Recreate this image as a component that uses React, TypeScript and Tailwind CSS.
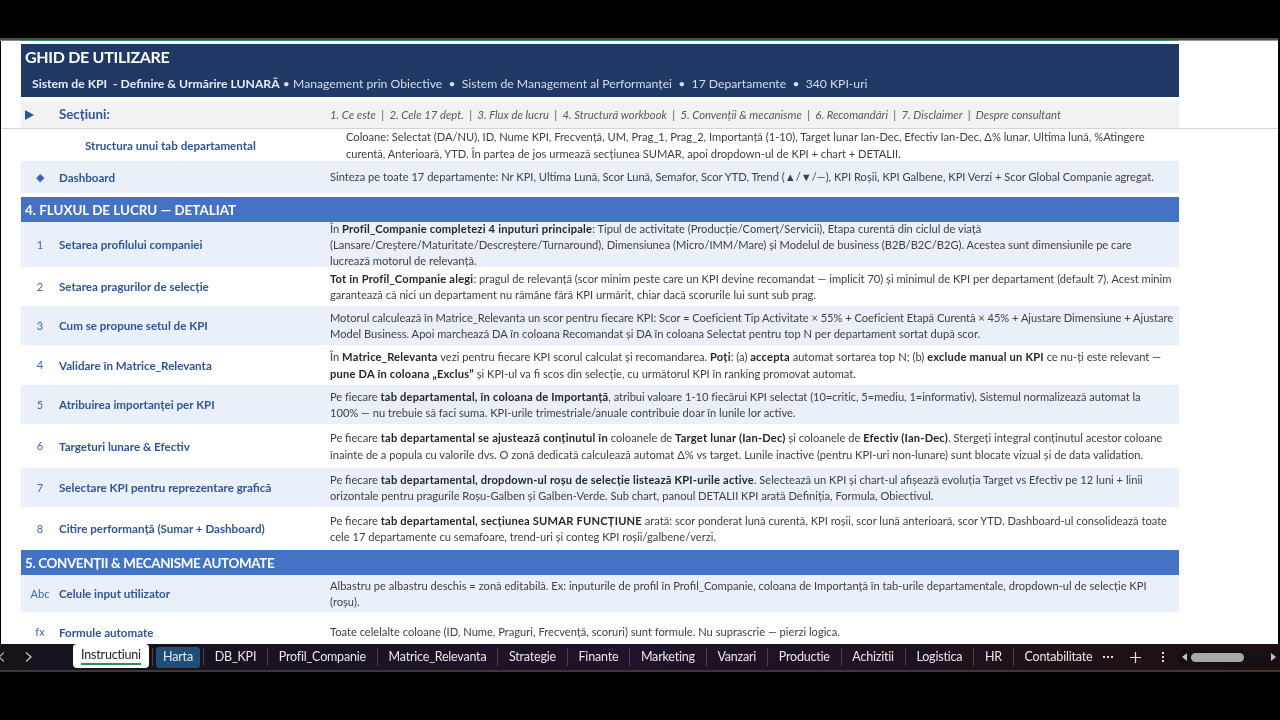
import React from "react";

const tabs = [
  "DB_KPI",
  "Profil_Companie",
  "Matrice_Relevanta",
  "Strategie",
  "Finante",
  "Marketing",
  "Vanzari",
  "Productie",
  "Achizitii",
  "Logistica",
  "HR",
  "Contabilitate",
];

const Row = ({ mark, label, light, h, children, markClass }: any) => (
  <div className={`flex shrink-0 items-center pt-[1px] ${h} ${light ? "bg-[#EAF0F9]" : "bg-white"}`}>
    <div className={`w-[38px] shrink-0 text-center text-[11px] text-[#3F68AD] ${markClass ?? ""}`}>{mark}</div>
    <div className="w-[271px] shrink-0 text-[11.6px] font-bold whitespace-nowrap text-[#2F5597]">{label}</div>
    <div className="text-[11.13px] leading-[16.3px] whitespace-nowrap text-[#404040]">{children}</div>
  </div>
);

const Section = ({ children }: any) => (
  <div className="flex h-[25px] shrink-0 items-center bg-[#4472C4] pt-[1px] pl-[4px] text-[13.4px] font-bold text-white">{children}</div>
);

const B = ({ children }: any) => <b className="font-bold tracking-[0.2px] text-[#262626]">{children}</b>;

export default function App() {
  return (
    <div className="flex h-[720px] w-[1280px] flex-col overflow-hidden bg-black font-['Lato',sans-serif] blur-[0.3px]">
      <div className="h-[38px] shrink-0" />
      <div className="h-[2px] w-[1278px] shrink-0 bg-[#4a4a4a]" />
      <div className="flex h-[1px] shrink-0">
        <div className="w-[20px] bg-[#888888]" />
        <div className="w-[1159px] bg-[#3E8E5A]" />
        <div className="w-[99px] bg-[#999999]" />
      </div>

      <div className="mr-[2px] ml-[1px] flex h-[603px] shrink-0 flex-col overflow-hidden bg-white">
        <div className="mt-[3px] ml-[20px] flex h-[53px] w-[1158px] shrink-0 flex-col bg-[#1F3864] text-white">
          <div className="mt-[2px] pl-[4px] text-[16px] leading-[22px] font-bold tracking-[-0.3px]">GHID DE UTILIZARE</div>
          <div className="mt-[8px] pl-[11px] text-[12.2px] leading-[16px] whitespace-nowrap text-[#D6DEEC]">
            <b className="font-bold text-[#E8EDF5]">Sistem de KPI &nbsp;- Definire &amp; Urmărire LUNARĂ</b> • Management prin Obiective &nbsp;• &nbsp;Sistem de Management al Performanței &nbsp;• &nbsp;17 Departamente &nbsp;• &nbsp;340 KPI-uri
          </div>
        </div>

        <div className="mt-[4px] ml-[20px] flex h-[27px] w-[1158px] shrink-0 items-center bg-[#F2F2F2] pt-[1px]">
          <div className="w-[38px] shrink-0 pl-[4px]">
            <svg width="9" height="10" viewBox="0 0 9 10" className="block"><path d="M0 0 L9 5 L0 10 Z" fill="#2F5597" /></svg>
          </div>
          <div className="w-[271px] shrink-0 text-[13.3px] font-bold text-[#2F5597]">Secțiuni:</div>
          <div className="text-[11.3px] whitespace-nowrap text-[#595959] italic">
            1. Ce este &nbsp;|&nbsp; 2. Cele 17 dept. &nbsp;|&nbsp; 3. Flux de lucru &nbsp;|&nbsp; 4. Structură workbook &nbsp;|&nbsp; 5. Convenții &amp; mecanisme &nbsp;|&nbsp; 6. Recomandări &nbsp;|&nbsp; 7. Disclaimer &nbsp;|&nbsp; Despre consultant
          </div>
        </div>
        <div className="h-[1px] shrink-0 bg-[#D4D4D4]" />

        <div className="ml-[20px] flex w-[1158px] flex-col">
          <div className="flex h-[32px] shrink-0 items-center bg-white pt-[1px]">
            <div className="w-[64px] shrink-0" />
            <div className="w-[261px] shrink-0 text-[11.6px] font-bold whitespace-nowrap text-[#2F5597]">Structura unui tab departamental</div>
            <div className="text-[11.13px] leading-[16.3px] whitespace-nowrap text-[#404040]">
              Coloane: Selectat (DA/NU), ID, Nume KPI, Frecvență, UM, Prag_1, Prag_2, Importanță (1-10), Target lunar Ian-Dec, Efectiv Ian-Dec, Δ% lunar, Ultima lună, %Atingere<br />
              curentă, Anterioară, YTD. În partea de jos urmează secțiunea SUMAR, apoi dropdown-ul de KPI + chart + DETALII.
            </div>
          </div>
          <Row mark="◆" markClass="text-[9px] text-[#2F5FB0]" label="Dashboard" light h="h-[32px]">
            Sinteza pe toate 17 departamente: Nr KPI, Ultima Lună, Scor Lună, Semafor, Scor YTD, Trend (▲/▼/—), KPI Roșii, KPI Galbene, KPI Verzi + Scor Global Companie agregat.
          </Row>
          <div className="h-[4px] shrink-0" />
          <Section>4. FLUXUL DE LUCRU — DETALIAT</Section>
          <Row mark="1" label="Setarea profilului companiei" light h="h-[45px]">
            În <B>Profil_Companie completezi 4 inputuri principale</B>: Tipul de activitate (Producție/Comerț/Servicii), Etapa curentă din ciclul de viață<br />
            (Lansare/Creștere/Maturitate/Descreștere/Turnaround), Dimensiunea (Micro/IMM/Mare) și Modelul de business (B2B/B2C/B2G). Acestea sunt dimensiunile pe care<br />
            lucrează motorul de relevanță.
          </Row>
          <Row mark="2" label="Setarea pragurilor de selecție" h="h-[39px]">
            <B>Tot în Profil_Companie alegi</B>: pragul de relevanță (scor minim peste care un KPI devine recomandat — implicit 70) și minimul de KPI per departament (default 7). Acest minim<br />
            garantează că nici un departament nu rămâne fără KPI urmărit, chiar dacă scorurile lui sunt sub prag.
          </Row>
          <Row mark="3" label="Cum se propune setul de KPI" light h="h-[39px]">
            <span className="tracking-[-0.04px]">Motorul calculează în Matrice_Relevanta un scor pentru fiecare KPI: Scor = Coeficient Tip Activitate × 55% + Coeficient Etapă Curentă × 45% + Ajustare Dimensiune + Ajustare</span><br />
            Model Business. Apoi marchează DA în coloana Recomandat și DA în coloana Selectat pentru top N per departament sortat după scor.
          </Row>
          <Row mark="4" label="Validare în Matrice_Relevanta" h="h-[40px]">
            În <B>Matrice_Relevanta</B> vezi pentru fiecare KPI scorul calculat și recomandarea. <B>Poți</B>: (a) <B>accepta</B> automat sortarea top N; (b) <B>exclude manual un KPI</B> ce nu-ți este relevant —<br />
            <B>pune DA în coloana „Exclus”</B> și KPI-ul va fi scos din selecție, cu următorul KPI în ranking promovat automat.
          </Row>
          <Row mark="5" label="Atribuirea importanței per KPI" light h="h-[39px]">
            <span className="tracking-[-0.04px]">Pe fiecare <B>tab departamental, în coloana de Importanță</B>, atribui valoare 1-10 fiecărui KPI selectat (10=critic, 5=mediu, 1=informativ). Sistemul normalizează automat la</span><br />
            100% — nu trebuie să faci suma. KPI-urile trimestriale/anuale contribuie doar în lunile lor active.
          </Row>
          <Row mark="6" label="Targeturi lunare & Efectiv" h="h-[44px]">
            Pe fiecare <B>tab departamental se ajustează conținutul în</B> coloanele de <B>Target lunar (Ian-Dec)</B> și coloanele de <B>Efectiv (Ian-Dec)</B>. Stergeți integral conținutul acestor coloane<br />
            înainte de a popula cu valorile dvs. O zonă dedicată calculează automat Δ% vs target. Lunile inactive (pentru KPI-uri non-lunare) sunt blocate vizual și de data validation.
          </Row>
          <Row mark="7" label="Selectare KPI pentru reprezentare grafică" light h="h-[39px]">
            Pe fiecare <B>tab departamental, dropdown-ul roșu de selecție listează KPI-urile active</B>. Selectează un KPI și chart-ul afișează evoluția Target vs Efectiv pe 12 luni + linii<br />
            orizontale pentru pragurile Roșu-Galben și Galben-Verde. Sub chart, panoul DETALII KPI arată Definiția, Formula, Obiectivul.
          </Row>
          <Row mark="8" label="Citire performanță (Sumar + Dashboard)" h="h-[43px]">
            Pe fiecare <B>tab departamental, secțiunea SUMAR FUNCȚIUNE</B> arată: scor ponderat lună curentă, KPI roșii, scor lună anterioară, scor YTD. Dashboard-ul consolidează toate<br />
            cele 17 departamente cu semafoare, trend-uri și conteg KPI roșii/galbene/verzi.
          </Row>
          <Section><span className="tracking-[-0.35px]">5. CONVENȚII &amp; MECANISME AUTOMATE</span></Section>
          <Row mark="Abc" label="Celule input utilizator" light h="h-[37px]">
            Albastru pe albastru deschis = zonă editabilă. Ex: inputurile de profil în Profil_Companie, coloana de Importanță în tab-urile departamentale, dropdown-ul de selecție KPI<br />
            (roșu).
          </Row>
          <Row mark="fx" label="Formule automate" h="h-[40px]">
            Toate celelalte coloane (ID, Nume, Praguri, Frecvență, scoruri) sunt formule. Nu suprascrie — pierzi logica.
          </Row>
        </div>
      </div>

      <div className="flex h-[28px] shrink-0 items-center border-b-2 border-[#3a3a3a] bg-gradient-to-r from-[#17121a] via-[#20132a] to-[#1e1010] text-[12.5px] tracking-[-0.2px] text-[#E8E8E8]">
        <div className="flex w-[73px] shrink-0 items-center justify-between pr-[41px]">
          <svg width="4" height="10" viewBox="0 0 4 10" fill="none" stroke="#B0B0B0" strokeWidth="1.2"><path d="M4 0.5 L-1 5 L4 9.5" /></svg>
          <svg width="7" height="10" viewBox="0 0 7 10" fill="none" stroke="#D0D0D0" strokeWidth="1.2"><path d="M1 0.5 L6 5 L1 9.5" /></svg>
        </div>
        <div className="flex h-[24px] w-[76px] shrink-0 items-center justify-center self-start rounded-[4px] bg-white text-[#222]">
          <span className="border-b-2 border-[#2F8F55] pb-[1px] leading-[14px]">Instructiuni</span>
        </div>
        <div className="mx-[3px] h-[18px] w-px shrink-0 bg-[#444]" />
        <div className="flex h-[21px] w-[44px] shrink-0 items-center justify-center rounded-[3px] bg-[#1F4E79]">Harta</div>
        <div className="ml-[3px] h-[18px] w-px shrink-0 bg-[#444]" />
        {tabs.map((tab, i) => (
          <div key={tab} className="flex items-center">
            {i > 0 && <div className="h-[18px] w-px shrink-0 bg-[#444]" />}
            <span className="px-[10.8px] whitespace-nowrap">{tab}</span>
          </div>
        ))}
        <div className="flex w-[10px] justify-between">
          <i className="size-[2px] bg-[#ddd]" /><i className="size-[2px] bg-[#ddd]" /><i className="size-[2px] bg-[#ddd]" />
        </div>
        <svg className="ml-[17px]" width="11" height="11" viewBox="0 0 11 11" stroke="#E0E0E0" strokeWidth="1.2"><path d="M5.5 0 V11 M0 5.5 H11" /></svg>
        <div className="ml-[21px] flex flex-col gap-[2px]">
          <i className="size-[2px] bg-[#ddd]" /><i className="size-[2px] bg-[#ddd]" /><i className="size-[2px] bg-[#ddd]" />
        </div>
        <div className="ml-[14px] flex h-[15px] w-[102px] items-center rounded-full bg-[#141016] px-[4px]">
          <svg width="5" height="8" viewBox="0 0 5 8"><path d="M5 0 V8 L0 4 Z" fill="#C0C0C0" /></svg>
          <div className="ml-[4px] h-[9px] w-[53px] rounded-full bg-[#A8A8A8]" />
          <svg className="ml-auto" width="5" height="8" viewBox="0 0 5 8"><path d="M0 0 V8 L5 4 Z" fill="#C0C0C0" /></svg>
        </div>
      </div>
    </div>
  );
}
